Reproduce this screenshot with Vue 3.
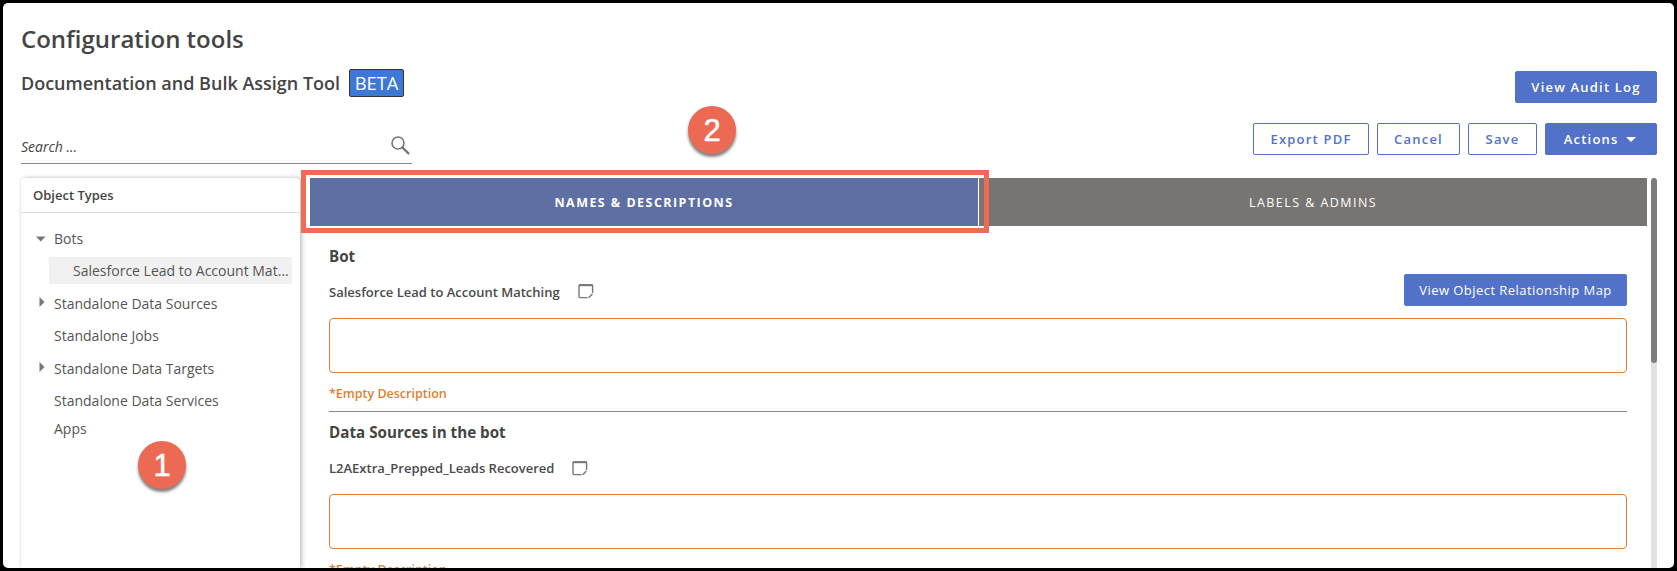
<script setup>
const treeItems = [
  { label: 'Bots', caret: 'down' },
  { label: 'Salesforce Lead to Account Mat…', selected: true },
  { label: 'Standalone Data Sources', caret: 'right' },
  { label: 'Standalone Jobs' },
  { label: 'Standalone Data Targets', caret: 'right' },
  { label: 'Standalone Data Services' },
  { label: 'Apps', tight: true }
]
</script>

<template>
  <div class="frame">
    <div class="page">
      <h1 class="title">Configuration tools</h1>

      <div class="sub-row">
        <div class="sub-title">
          <span>Documentation and Bulk Assign Tool</span>
          <span class="beta">BETA</span>
        </div>
        <button class="btn btn-solid audit">View Audit Log</button>
      </div>

      <div class="tool-row">
        <div class="search">
          <span class="search-text">Search ...</span>
          <svg class="search-icon" width="20" height="20" viewBox="0 0 20 20">
            <circle cx="8" cy="8" r="6" fill="none" stroke="#777" stroke-width="1.6" />
            <path d="M12.4 12.4 L18.4 18.4" stroke="#777" stroke-width="2.2" stroke-linecap="round" />
          </svg>
        </div>
        <div class="tool-buttons">
          <button class="btn btn-line export">Export PDF</button>
          <button class="btn btn-line cancel">Cancel</button>
          <button class="btn btn-line save">Save</button>
          <button class="btn btn-solid actions">Actions <i class="drop"></i></button>
        </div>
      </div>

      <div class="main">
        <aside class="types">
          <div class="types-head">Object Types</div>
          <ul class="tree">
            <li
              v-for="item in treeItems"
              :key="item.label"
              :class="{ selected: item.selected, tight: item.tight }"
            >
              <svg v-if="item.caret === 'down'" class="caret" width="10" height="6" viewBox="0 0 10 6">
                <path d="M0 0.5 H9.5 L4.75 5.5 Z" fill="#777" />
              </svg>
              <svg v-if="item.caret === 'right'" class="caret caret-right" width="6" height="10" viewBox="0 0 6 10">
                <path d="M0.5 0 L5.5 5 L0.5 10 Z" fill="#777" />
              </svg>
              <span class="tree-label">{{ item.label }}</span>
            </li>
          </ul>
        </aside>

        <section class="panel">
          <div class="panel-body">
            <div class="tabs">
              <div class="tab tab-on">NAMES &amp; DESCRIPTIONS</div>
              <div class="tab tab-off">LABELS &amp; ADMINS</div>
            </div>
            <div class="content">
              <h3 class="heading">Bot</h3>
              <div class="name-row">
                <span class="name">Salesforce Lead to Account Matching</span>
                <svg class="note" width="16" height="15" viewBox="0 0 16 15">
                  <path d="M14.6 9 V2 Q14.6 1 13.6 1 H2 Q1 1 1 2 V12.6 Q1 13.6 2 13.6 H9.6" fill="none" stroke="#777" stroke-width="1.4" />
                  <path d="M1 1.2 H14.6" stroke="#777" stroke-width="2" />
                  <path d="M10.6 13.8 L14.4 10" stroke="#777" stroke-width="1.4" />
                </svg>
                <button class="btn btn-solid map">View Object Relationship Map</button>
              </div>
              <div class="desc-box"></div>
              <p class="empty">*Empty Description</p>
              <hr class="rule" />

              <h3 class="heading second">Data Sources in the bot</h3>
              <div class="name-row second-row">
                <span class="name">L2AExtra_Prepped_Leads Recovered</span>
                <svg class="note" width="16" height="15" viewBox="0 0 16 15">
                  <path d="M14.6 9 V2 Q14.6 1 13.6 1 H2 Q1 1 1 2 V12.6 Q1 13.6 2 13.6 H9.6" fill="none" stroke="#777" stroke-width="1.4" />
                  <path d="M1 1.2 H14.6" stroke="#777" stroke-width="2" />
                  <path d="M10.6 13.8 L14.4 10" stroke="#777" stroke-width="1.4" />
                </svg>
              </div>
              <div class="desc-box"></div>
              <p class="empty">*Empty Description</p>
            </div>
          </div>
          <div class="scroll"><div class="thumb"></div></div>
        </section>
      </div>

      <!-- callouts drawn over the screen -->
      <div class="callout-box"></div>
      <div class="callout one">1</div>
      <div class="callout two">2</div>
    </div>
  </div>
</template>

<style>
html, body {
  margin: 0;
  background: #000;
}
</style>

<style scoped>
.frame {
  box-sizing: border-box;
  width: 1677px;
  height: 571px;
  padding: 3px;
  background: #000;
  overflow: hidden;
  font-family: "Open Sans", "Noto Sans", sans-serif;
  color: #444;
}
.page {
  position: relative;
  box-sizing: border-box;
  height: 565px;
  padding: 20px 17px 0 18px;
  background: #fff;
  border-radius: 5px;
  overflow: hidden;
}
.title {
  margin: 0;
  font-size: 24px;
  line-height: 32px;
  font-weight: 550;
  color: #444;
}
.sub-row {
  display: flex;
  justify-content: space-between;
  align-items: flex-start;
  margin-top: 14px;
  height: 34px;
}
.sub-title {
  display: flex;
  align-items: center;
  height: 28px;
  font-size: 18px;
  font-weight: 550;
  gap: 9px;
}
.beta {
  box-sizing: border-box;
  width: 55px;
  height: 28px;
  line-height: 26px;
  text-align: center;
  background: #3c78d8;
  border: 1px solid #333;
  border-radius: 2px;
  color: #fff;
  font-size: 18.4px;
  font-weight: 400;
}
.btn {
  box-sizing: border-box;
  height: 32px;
  padding: 0;
  font-family: inherit;
  font-size: 13px;
  font-weight: 600;
  letter-spacing: 1.2px;
  border-radius: 2px;
}
.btn-solid {
  background: #5272c9;
  border: 1px solid #5272c9;
  color: #fff;
}
.btn-line {
  background: #fff;
  border: 1px solid #5272c9;
  color: #5272c9;
}
.audit {
  width: 142px;
  margin-top: 2px;
}
.tool-row {
  display: flex;
  justify-content: space-between;
  align-items: flex-start;
  margin-top: 20px;
  height: 41px;
}
.search {
  box-sizing: border-box;
  display: flex;
  justify-content: space-between;
  align-items: center;
  width: 391px;
  height: 41px;
  padding: 6px 2px 0 0;
  border-bottom: 1px solid #888;
}
.search-text {
  font-size: 14px;
  font-style: italic;
}
.search-icon {
  margin-top: -3px;
}
.tool-buttons {
  display: flex;
  gap: 8px;
}
.export { width: 116px; }
.cancel { width: 83px; }
.save { width: 69px; }
.actions { width: 112px; padding-right: 2px; }
.drop {
  display: inline-block;
  margin-left: 3px;
  vertical-align: 2px;
  border-left: 5px solid transparent;
  border-right: 5px solid transparent;
  border-top: 5px solid #fff;
}
.main {
  display: flex;
  height: 390px;
  margin-top: 14px;
}
.types {
  box-sizing: border-box;
  flex: none;
  width: 279px;
  background: #fff;
  border-radius: 4px 4px 0 0;
  box-shadow: 0 0 3px rgba(0, 0, 0, 0.12), 2px 0 5px rgba(0, 0, 0, 0.22);
}
.types-head {
  box-sizing: border-box;
  height: 35px;
  padding-left: 12px;
  line-height: 35px;
  font-size: 13px;
  font-weight: 600;
  border-bottom: 1px solid #ddd;
}
.tree {
  margin: 0;
  padding: 12px 0 0;
  list-style: none;
  font-size: 14px;
  color: #555;
}
.tree li {
  position: relative;
  height: 27px;
  margin-bottom: 5.4px;
  padding-left: 33px;
  line-height: 27px;
  white-space: nowrap;
}
.tree li.tight {
  margin-top: -4px;
}
.tree li.selected {
  box-sizing: border-box;
  width: 243px;
  margin-left: 28px;
  padding-left: 24px;
  background: #f1f1f1;
}
.caret {
  position: absolute;
  left: 15px;
  top: 11px;
}
.caret-right {
  left: 18px;
  top: 7px;
}
.panel {
  display: flex;
  flex: 1;
  margin-left: 9px;
  min-width: 0;
  background: #fff;
}
.panel-body {
  flex: none;
  width: 1337px;
  margin-left: 1px;
}
.tabs {
  display: flex;
  height: 48px;
}
.tab {
  flex: 1;
  padding-top: 1px;
  line-height: 47px;
  text-align: center;
  font-size: 12.5px;
  letter-spacing: 1.45px;
  color: #fff;
}
.tab-on {
  background: #5e6fa3;
  font-weight: 700;
  border-right: 1px solid #fff;
}
.tab-off {
  background: #787472;
}
.content {
  padding: 19px 20px 0 19px;
}
.heading {
  margin: 0;
  height: 22px;
  line-height: 22px;
  font-size: 15.2px;
  font-weight: 700;
}
.name-row {
  display: flex;
  align-items: center;
  height: 32px;
  margin-top: 7px;
}
.name {
  margin-top: 4px;
  font-size: 13px;
  font-weight: 550;
  color: #4a4a4a;
}
.note {
  margin-left: 18px;
  margin-top: 3px;
}
.map {
  width: 223px;
  margin-left: auto;
  font-weight: 500;
  letter-spacing: 0.45px;
}
.desc-box {
  box-sizing: border-box;
  height: 55px;
  margin-top: 12px;
  border: 1px solid #de8033;
  border-radius: 4px;
}
.empty {
  margin: 12px 0 0;
  height: 18px;
  line-height: 18px;
  font-size: 12.5px;
  font-weight: 550;
  color: #de8033;
}
.rule {
  margin: 8px 0 0;
  border: 0;
  border-top: 1px solid #888;
}
.heading.second {
  margin-top: 9px;
}
.second-row {
  margin-top: 9px;
  height: 32px;
}
.second-row .name,
.second-row .note {
  margin-top: 0;
}
.second-row + .desc-box {
  margin-top: 10px;
}
.scroll {
  flex: none;
  width: 6px;
  height: 100%;
  margin-left: 4px;
  background: #e2e2e2;
  border-radius: 3px 3px 0 0;
}
.thumb {
  height: 185px;
  background: #7d7d7d;
  border-radius: 3px;
}
.callout-box {
  position: absolute;
  left: 298px;
  top: 167px;
  box-sizing: border-box;
  width: 688px;
  height: 63px;
  border: 5px solid #ee6b55;
}
.callout {
  position: absolute;
  box-sizing: border-box;
  width: 48px;
  height: 48px;
  border-radius: 50%;
  background: #ec6a53;
  box-shadow: 0 3px 3px rgba(0, 0, 0, 0.5);
  color: #fff;
  font-family: "Liberation Sans", Arial, sans-serif;
  font-size: 31px;
  line-height: 50px;
  text-align: center;
  -webkit-text-stroke: 0.5px #fff;
}
.one {
  left: 135px;
  top: 438px;
}
.two {
  left: 685px;
  top: 103px;
}
</style>
